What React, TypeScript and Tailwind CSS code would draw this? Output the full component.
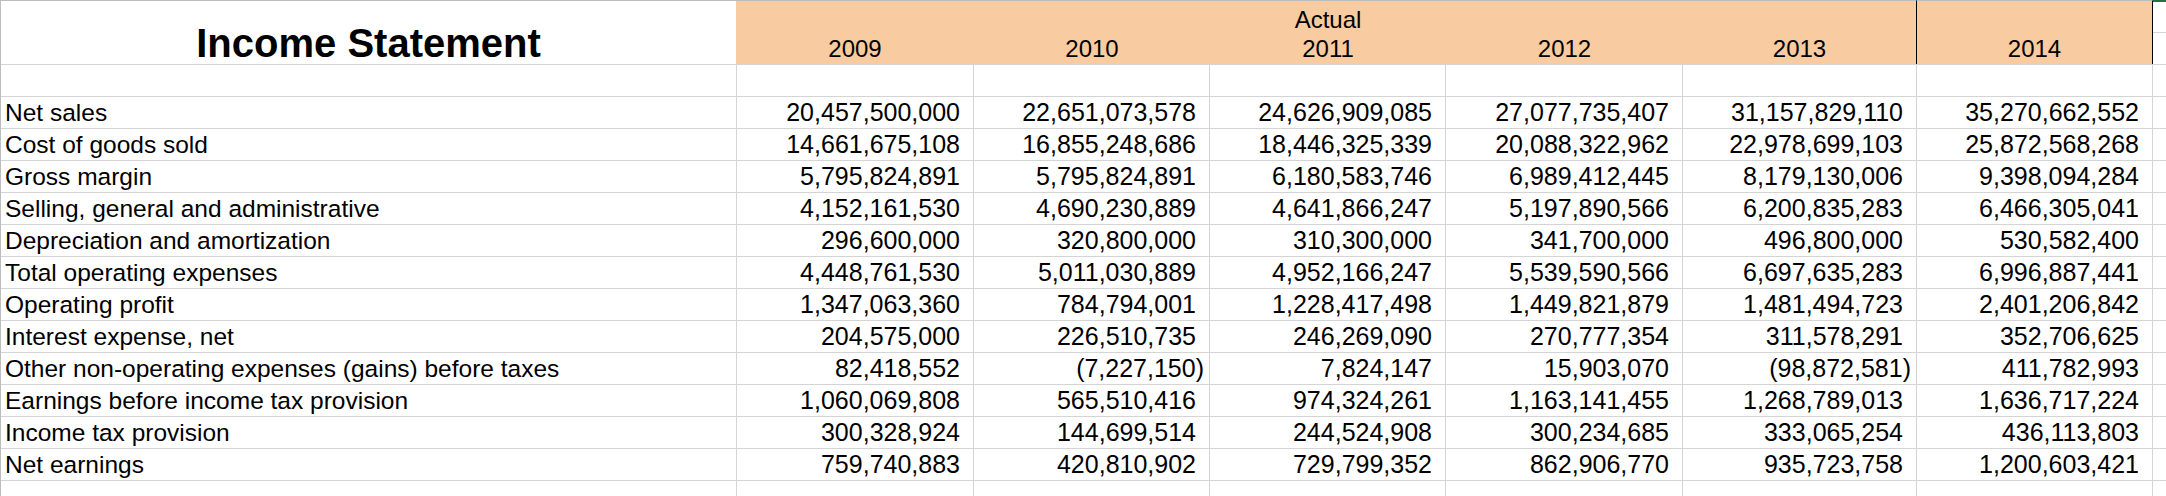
import React from 'react';

const years = ['2009', '2010', '2011', '2012', '2013', '2014'];

// data column widths (px), border-right included
const colWidths = ['w-[237px]', 'w-[236px]', 'w-[236px]', 'w-[237px]', 'w-[234px]', 'w-[236px]'];
const headWidths = ['w-[238px]', 'w-[236px]', 'w-[236px]', 'w-[237px]', 'w-[234px]', 'w-[236px]'];

const rows: { label: string; values: string[] }[] = [
  { label: 'Net sales', values: ['20,457,500,000', '22,651,073,578', '24,626,909,085', '27,077,735,407', '31,157,829,110', '35,270,662,552'] },
  { label: 'Cost of goods sold', values: ['14,661,675,108', '16,855,248,686', '18,446,325,339', '20,088,322,962', '22,978,699,103', '25,872,568,268'] },
  { label: 'Gross margin', values: ['5,795,824,891', '5,795,824,891', '6,180,583,746', '6,989,412,445', '8,179,130,006', '9,398,094,284'] },
  { label: 'Selling, general and administrative', values: ['4,152,161,530', '4,690,230,889', '4,641,866,247', '5,197,890,566', '6,200,835,283', '6,466,305,041'] },
  { label: 'Depreciation and amortization', values: ['296,600,000', '320,800,000', '310,300,000', '341,700,000', '496,800,000', '530,582,400'] },
  { label: 'Total operating expenses', values: ['4,448,761,530', '5,011,030,889', '4,952,166,247', '5,539,590,566', '6,697,635,283', '6,996,887,441'] },
  { label: 'Operating profit', values: ['1,347,063,360', '784,794,001', '1,228,417,498', '1,449,821,879', '1,481,494,723', '2,401,206,842'] },
  { label: 'Interest expense, net', values: ['204,575,000', '226,510,735', '246,269,090', '270,777,354', '311,578,291', '352,706,625'] },
  { label: 'Other non-operating expenses (gains) before taxes', values: ['82,418,552', '(7,227,150)', '7,824,147', '15,903,070', '(98,872,581)', '411,782,993'] },
  { label: 'Earnings before income tax provision', values: ['1,060,069,808', '565,510,416', '974,324,261', '1,163,141,455', '1,268,789,013', '1,636,717,224'] },
  { label: 'Income tax provision', values: ['300,328,924', '144,699,514', '244,524,908', '300,234,685', '333,065,254', '436,113,803'] },
  { label: 'Net earnings', values: ['759,740,883', '420,810,902', '729,799,352', '862,906,770', '935,723,758', '1,200,603,421'] },
];

function Row({ label, values }: { label?: string; values?: string[] }) {
  return (
    <div className="flex h-[32px] border-b border-[#d4d4d4] text-[25px]">
      <div className="w-[736px] shrink-0 border-r border-[#d4d4d4] pl-[4px] text-[24.5px] leading-[31px] whitespace-nowrap">
        {label}
      </div>
      {colWidths.map((w, i) => {
        const v = values ? values[i] : '';
        const neg = v.startsWith('(');
        return (
          <div
            key={i}
            className={`${w} shrink-0 border-r border-[#d4d4d4] text-right leading-[31px] whitespace-nowrap ${neg ? 'pr-[5px]' : 'pr-[13px]'}`}
          >
            {v}
          </div>
        );
      })}
      <div className="flex-1" />
    </div>
  );
}

export default function App() {
  return (
    <div className="w-[2166px] h-[496px] overflow-hidden bg-white text-black text-[24px] font-['Liberation_Sans',Arial,sans-serif] border-l border-[#bdbdbd]">
      {/* header */}
      <div className="flex h-[65px] border-b border-[#d4d4d4]">
        <div className="w-[735px] shrink-0 border-t border-[#bdbdbd] flex items-end justify-center pb-[1px]">
          <span className="text-[40px] font-bold leading-[40px]">Income Statement</span>
        </div>
        {years.map((y, i) => (
          <div
            key={y}
            className={`${headWidths[i]} shrink-0 border-t border-[#bdbdbd] bg-[#f8cba0] flex flex-col ${i >= 4 ? 'border-r border-r-black' : ''}`}
          >
            <div className="h-[32px] pt-[5px] text-center leading-[27px]">{y === '2011' ? 'Actual' : ''}</div>
            <div className="flex-1 text-center leading-[31px]">{y}</div>
          </div>
        ))}
        <div className="flex-1 border-t-2 border-[#217346] flex flex-col">
          <div className="h-[31px] border-b border-[#d4d4d4]" />
        </div>
      </div>
      <Row />
      {rows.map((r) => (
        <Row key={r.label} label={r.label} values={r.values} />
      ))}
      <Row />
    </div>
  );
}
